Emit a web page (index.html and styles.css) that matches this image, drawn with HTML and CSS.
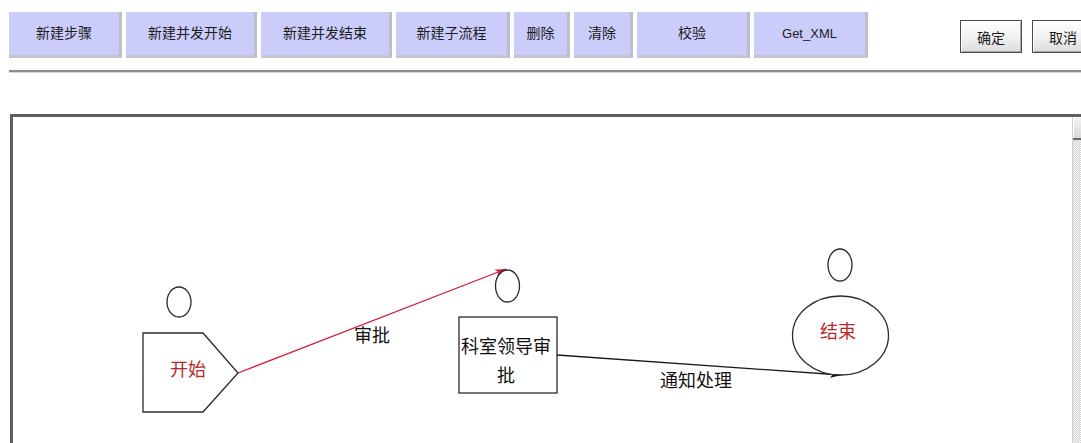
FILE: index.html
```html
<!DOCTYPE html>
<html lang="zh">
<head>
<meta charset="utf-8">
<title>流程设计</title>
<link rel="stylesheet" href="styles.css">
</head>
<body>
<div class="toolbar">
  <div class="tools">
    <button class="tool w113">新建步骤</button>
    <button class="tool w131">新建并发开始</button>
    <button class="tool w131">新建并发结束</button>
    <button class="tool w114">新建子流程</button>
    <button class="tool w56">删除</button>
    <button class="tool w59">清除</button>
    <button class="tool w113">校验</button>
    <button class="tool w114 latin">Get_XML</button>
  </div>
  <div class="actions">
    <button class="act">确定</button>
    <button class="act">取消</button>
  </div>
</div>
<div class="rule"></div>
<div class="canvas">
  <div class="drawing">
    <svg class="diagram" width="1059" height="330" viewBox="0 0 1059 330">
      <defs>
        <marker id="arrRed" viewBox="0 0 12 8" refX="11" refY="4" markerWidth="12" markerHeight="8" markerUnits="userSpaceOnUse" orient="auto">
          <path d="M0,0.5 L12,4 L0,7.5 L3,4 Z" fill="#d0203a"/>
        </marker>
        <marker id="arrBlack" viewBox="0 0 12 8" refX="11" refY="4" markerWidth="12" markerHeight="8" markerUnits="userSpaceOnUse" orient="auto">
          <path d="M0,0.5 L12,4 L0,7.5 L3,4 Z" fill="#111"/>
        </marker>
      </defs>

      <!-- 开始 -->
      <ellipse cx="166" cy="185" rx="12" ry="15" class="shape"/>
      <polygon points="130,216 190,216 225,256 190,295 130,295" class="shape"/>
      <text x="175" y="251" class="label red">开始</text>

      <!-- 审批 连线 -->
      <line x1="225" y1="256" x2="493" y2="152" class="link red-line" marker-end="url(#arrRed)"/>
      <text x="359" y="217" class="label">审批</text>

      <!-- 科室领导审批 -->
      <ellipse cx="494.5" cy="169" rx="12" ry="16" class="shape"/>
      <rect x="446" y="200" width="98" height="76" class="shape"/>
      <text x="493" y="228" class="label">科室领导审</text>
      <text x="493" y="257" class="label">批</text>

      <!-- 通知处理 连线 -->
      <line x1="544" y1="238" x2="828" y2="258" class="link" marker-end="url(#arrBlack)"/>
      <text x="683" y="262" class="label">通知处理</text>

      <!-- 结束 -->
      <ellipse cx="827" cy="148" rx="12" ry="16" class="shape"/>
      <ellipse cx="827.5" cy="218.5" rx="48" ry="39.5" class="shape"/>
      <text x="825" y="213" class="label red">结束</text>
    </svg>
  </div>
  <div class="scrollbar">
    <div class="scroll-up"></div>
    <div class="scroll-track"></div>
  </div>
</div>
</body>
</html>
```

FILE: styles.css
```css
html, body {
  margin: 0;
  padding: 0;
  background: #ffffff;
  overflow: hidden;
  width: 1081px;
  height: 443px;
}

body {
  font-family: "Noto Sans CJK SC", "Noto Sans", sans-serif;
  color: #1a1a1a;
}

.toolbar {
  display: flex;
  align-items: flex-start;
  padding: 12px 0 0 9px;
  width: 1100px;
}

.tools {
  display: flex;
  gap: 4px;
}

.tool {
  height: 46px;
  margin: 0;
  padding: 0 0 4px 0;
  background: #ccccfb;
  border: none;
  border-right: 3px solid #bdbdcc;
  border-bottom: 3px solid #c4c4cf;
  font-family: "Noto Sans CJK SC", sans-serif;
  font-size: 14px;
  color: #1c1c1c;
  text-align: center;
}

.tool.latin {
  font-family: "Liberation Sans", Arial, sans-serif;
  font-size: 13px;
  padding-bottom: 1px;
}

.w113 { width: 113px; }
.w131 { width: 131px; }
.w114 { width: 114px; }
.w56 { width: 56px; }
.w59 { width: 59px; }

.actions {
  display: flex;
  gap: 10px;
  margin-left: 92px;
  margin-top: 8px;
}

.act {
  width: 62px;
  height: 33px;
  margin: 0;
  padding: 0;
  border: 1px solid #4a4a4a;
  box-shadow: inset 1px 1px 0 #ffffff, inset -1px -1px 0 #a8a8a8;
  background: linear-gradient(#ffffff, #f2f2f2 50%, #dcdcdc);
  font-family: "Noto Sans CJK SC", sans-serif;
  font-size: 14px;
  color: #1a1a1a;
}

.rule {
  margin: 12px 0 0 9px;
  height: 0;
  border-top: 2px solid #8c8c8c;
  border-bottom: 1px solid #d6d6d6;
}

.canvas {
  display: flex;
  margin: 41px 0 0 10px;
  width: 1090px;
  height: 340px;
  border-top: 3px solid #5e5e5e;
  border-left: 3px solid #5e5e5e;
  box-sizing: border-box;
}

.drawing {
  width: 1059px;
  flex: none;
}

.diagram {
  display: block;
}

.shape {
  fill: #ffffff;
  stroke: #2a2a2a;
  stroke-width: 1.3;
}

.link {
  stroke: #1a1a1a;
  stroke-width: 1.3;
}

.red-line {
  stroke: #d0203a;
}

.label {
  font-family: "Noto Sans CJK SC", sans-serif;
  font-size: 18px;
  fill: #111111;
  text-anchor: middle;
  dominant-baseline: central;
}

.label.red {
  fill: #b42a2a;
}

.scrollbar {
  width: 17px;
  display: flex;
  flex-direction: column;
  border-left: 1px solid #d0d0d0;
}

.scroll-up {
  height: 21px;
  background: linear-gradient(#f4f4f4, #d8d8d8);
  border-bottom: 2px solid #6a6a6a;
  box-shadow: inset 1px 1px 0 #ffffff;
}

.scroll-track {
  flex: 1;
  background: repeating-conic-gradient(#d4d4d4 0 25%, #f6f6f6 0 50%) 0 0 / 2px 2px;
}
```
